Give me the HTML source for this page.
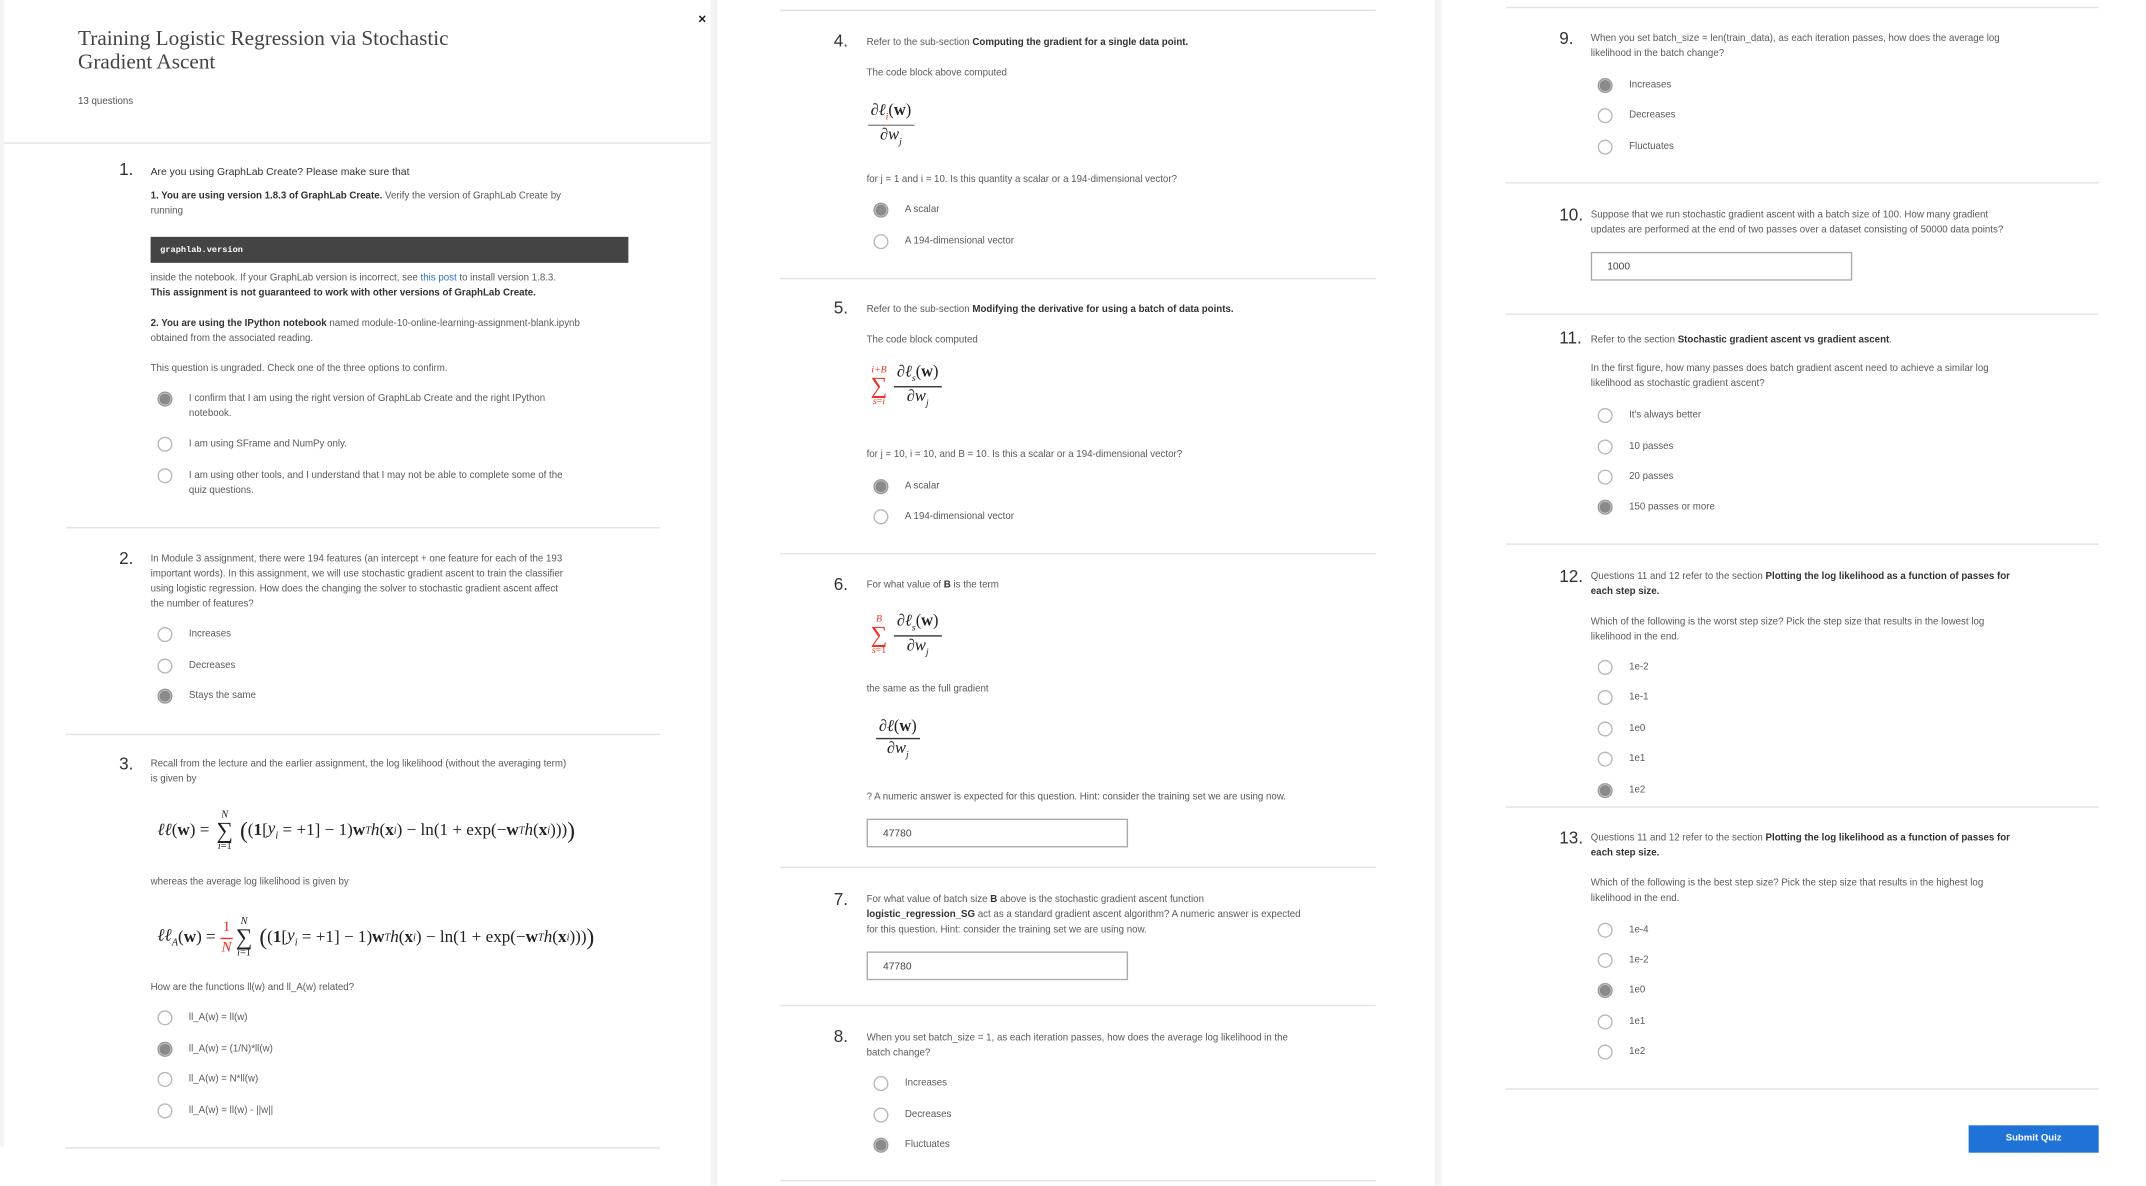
<!DOCTYPE html>
<html><head><meta charset="utf-8"><style>
*{margin:0;padding:0;box-sizing:border-box}
html,body{width:2146px;height:1185px;overflow:hidden;background:#fff}
#w{position:absolute;left:0;top:0;width:1568px;height:866px;transform:scale(1.369);transform-origin:0 0;font-family:"Liberation Sans",sans-serif;color:#555}
.bg{position:absolute;background:#f3f3f3}
.t{position:absolute;font-size:7.1px;line-height:11px;white-space:nowrap;color:#5a5a5a}
.t b{color:#333;font-weight:bold}
.h{font-size:7.6px;color:#333}
.n{position:absolute;font-size:12.5px;line-height:14px;color:#333;white-space:nowrap}
.hr{position:absolute;height:1px;background:#e2e2e2}
.r{position:absolute;width:11px;height:11px;border:1px solid #b8b8b8;border-radius:50%;background:#fff}
.r.c{border:1px solid #999;background:radial-gradient(circle,#8a8a8a 0 3.8px,#d0d0d0 4.2px 100%)}
.inp{position:absolute;border:1px solid #aaa;background:#fff;font-size:7.5px;line-height:19px;padding-left:11px;color:#444}
.m{position:absolute;font-family:"Liberation Serif",serif;color:#222;white-space:nowrap;display:flex;align-items:center;line-height:1.1}
.fr{display:inline-flex;flex-direction:column;align-items:center;line-height:1.15}
.fr .nu{border-bottom:0.8px solid #333;padding:0 2px 1px}
.i{font-style:italic}
.red{color:#e32}
.sm{font-size:0.6em}
.sum{display:inline-flex;flex-direction:column;align-items:center;line-height:0.9;margin:0 2px}
.sum .s{font-size:17px;line-height:0.95}
.big{font-size:17px}
</style></head><body><div id="w">
<div class="bg" style="left:0;top:0;width:3px;height:838px"></div>
<div class="bg" style="left:519px;top:0;width:5px;height:866px"></div>
<div class="bg" style="left:1048px;top:0;width:5px;height:866px"></div>

<div style="position:absolute;left:510px;top:9px;font-size:10px;font-weight:bold;color:#222">×</div>
<div style="position:absolute;left:57px;top:21px;font-family:'Liberation Serif',serif;font-size:15.5px;line-height:16.5px;color:#444">Training Logistic Regression via Stochastic<br>Gradient Ascent</div>
<div class="t" style="left:57px;top:69px;color:#555">13 questions</div>
<div class="hr" style="left:3px;top:104px;width:516px"></div>

<div class="n" style="left:87px;top:117px">1.</div>
<div class="t h" style="left:110px;top:120px">Are you using GraphLab Create? Please make sure that</div>
<div class="t" style="left:110px;top:138px"><b>1. You are using version 1.8.3 of GraphLab Create.</b> Verify the version of GraphLab Create by<br>running</div>
<div style="position:absolute;left:110px;top:173px;width:349px;height:19px;background:#444;color:#fff;font-family:'Liberation Mono',monospace;font-size:6.3px;font-weight:bold;line-height:19px;padding-left:7px">graphlab.version</div>
<div class="t" style="left:110px;top:198px">inside the notebook. If your GraphLab version is incorrect, see <span style="color:#2a73c9">this post</span> to install version 1.8.3.<br><b>This assignment is not guaranteed to work with other versions of GraphLab Create.</b></div>
<div class="t" style="left:110px;top:231px"><b>2. You are using the IPython notebook</b> named module-10-online-learning-assignment-blank.ipynb<br>obtained from the associated reading.</div>
<div class="t" style="left:110px;top:264px">This question is ungraded. Check one of the three options to confirm.</div>
<div class="r c" style="left:115px;top:286px"></div><div class="t" style="left:138px;top:286px">I confirm that I am using the right version of GraphLab Create and the right IPython<br>notebook.</div>
<div class="r" style="left:115px;top:319px"></div><div class="t" style="left:138px;top:319px">I am using SFrame and NumPy only.</div>
<div class="r" style="left:115px;top:342px"></div><div class="t" style="left:138px;top:342px">I am using other tools, and I understand that I may not be able to complete some of the<br>quiz questions.</div>
<div class="hr" style="left:48px;top:385px;width:434px"></div>

<div class="n" style="left:87px;top:401px">2.</div>
<div class="t" style="left:110px;top:403px">In Module 3 assignment, there were 194 features (an intercept + one feature for each of the 193<br>important words). In this assignment, we will use stochastic gradient ascent to train the classifier<br>using logistic regression. How does the changing the solver to stochastic gradient ascent affect<br>the number of features?</div>
<div class="r" style="left:115px;top:458px"></div><div class="t" style="left:138px;top:458px">Increases</div>
<div class="r" style="left:115px;top:481px"></div><div class="t" style="left:138px;top:481px">Decreases</div>
<div class="r c" style="left:115px;top:503px"></div><div class="t" style="left:138px;top:503px">Stays the same</div>
<div class="hr" style="left:48px;top:536px;width:434px"></div>

<div class="n" style="left:87px;top:551px">3.</div>
<div class="t" style="left:110px;top:553px">Recall from the lecture and the earlier assignment, the log likelihood (without the averaging term)<br>is given by</div>
<div class="m" style="left:115px;top:589px;height:36px;font-size:12.5px"><span class="i">ℓℓ</span>(<b>w</b>)&nbsp;=&nbsp;<span class="sum"><span class="sm i">N</span><span class="s">∑</span><span class="sm"><span class="i">i</span>=1</span></span>&nbsp;<span class="big">(</span>(<b>1</b>[<span class="i">y<sub class="sm">i</sub></span>&nbsp;=&nbsp;+1]&nbsp;−&nbsp;1)<b>w</b><sup class="sm i">T</sup><span class="i">h</span>(<b>x</b><sub class="sm i">i</sub>)&nbsp;−&nbsp;ln(1&nbsp;+&nbsp;exp(−<b>w</b><sup class="sm i">T</sup><span class="i">h</span>(<b>x</b><sub class="sm i">i</sub>)))<span class="big">)</span></div>
<div class="t" style="left:110px;top:639px">whereas the average log likelihood is given by</div>
<div class="m" style="left:115px;top:667px;height:36px;font-size:12.5px"><span class="i">ℓℓ<sub class="sm">A</sub></span>(<b>w</b>)&nbsp;=&nbsp;<span class="fr red" style="font-size:11px"><span class="nu" style="border-color:#e32">1</span><span class="i">N</span></span><span class="sum"><span class="sm i">N</span><span class="s">∑</span><span class="sm"><span class="i">i</span>=1</span></span>&nbsp;<span class="big">(</span>(<b>1</b>[<span class="i">y<sub class="sm">i</sub></span>&nbsp;=&nbsp;+1]&nbsp;−&nbsp;1)<b>w</b><sup class="sm i">T</sup><span class="i">h</span>(<b>x</b><sub class="sm i">i</sub>)&nbsp;−&nbsp;ln(1&nbsp;+&nbsp;exp(−<b>w</b><sup class="sm i">T</sup><span class="i">h</span>(<b>x</b><sub class="sm i">i</sub>)))<span class="big">)</span></div>
<div class="t" style="left:110px;top:716px">How are the functions ll(w) and ll_A(w) related?</div>
<div class="r" style="left:115px;top:738px"></div><div class="t" style="left:138px;top:738px">ll_A(w) = ll(w)</div>
<div class="r c" style="left:115px;top:761px"></div><div class="t" style="left:138px;top:761px">ll_A(w) = (1/N)*ll(w)</div>
<div class="r" style="left:115px;top:783px"></div><div class="t" style="left:138px;top:783px">ll_A(w) = N*ll(w)</div>
<div class="r" style="left:115px;top:806px"></div><div class="t" style="left:138px;top:806px">ll_A(w) = ll(w) - ||w||</div>
<div class="hr" style="left:48px;top:838px;width:434px"></div>

<div class="hr" style="left:570px;top:7px;width:435px"></div>
<div class="n" style="left:609px;top:23px">4.</div>
<div class="t" style="left:633px;top:26px">Refer to the sub-section <b>Computing the gradient for a single data point.</b></div>
<div class="t" style="left:633px;top:48px">The code block above computed</div>
<div class="m" style="left:634px;top:74px;font-size:12px"><span class="fr"><span class="nu" style="border-bottom-color:#888">∂<span class="i">ℓ<sub class="sm red">i</sub></span>(<b>w</b>)</span><span>∂<span class="i">w<sub class="sm">j</sub></span></span></span></div>
<div class="t" style="left:633px;top:126px">for j = 1 and i = 10. Is this quantity a scalar or a 194-dimensional vector?</div>
<div class="r c" style="left:638px;top:148px"></div><div class="t" style="left:661px;top:148px">A scalar</div>
<div class="r" style="left:638px;top:171px"></div><div class="t" style="left:661px;top:171px">A 194-dimensional vector</div>
<div class="hr" style="left:570px;top:203px;width:435px"></div>

<div class="n" style="left:609px;top:218px">5.</div>
<div class="t" style="left:633px;top:221px">Refer to the sub-section <b>Modifying the derivative for using a batch of data points.</b></div>
<div class="t" style="left:633px;top:243px">The code block computed</div>
<div class="m" style="left:634px;top:265px;font-size:12px"><span class="sum red"><span class="sm i">i+B</span><span class="s">∑</span><span class="sm"><span class="i">s</span>=<span class="i">i</span></span></span>&nbsp;<span class="fr"><span class="nu">∂<span class="i">ℓ<sub class="sm">s</sub></span>(<b>w</b>)</span><span>∂<span class="i">w<sub class="sm">j</sub></span></span></span></div>
<div class="t" style="left:633px;top:327px">for j = 10, i = 10, and B = 10. Is this a scalar or a 194-dimensional vector?</div>
<div class="r c" style="left:638px;top:350px"></div><div class="t" style="left:661px;top:350px">A scalar</div>
<div class="r" style="left:638px;top:372px"></div><div class="t" style="left:661px;top:372px">A 194-dimensional vector</div>
<div class="hr" style="left:570px;top:404px;width:435px"></div>

<div class="n" style="left:609px;top:420px">6.</div>
<div class="t" style="left:633px;top:422px">For what value of <b>B</b> is the term</div>
<div class="m" style="left:634px;top:447px;font-size:12px"><span class="sum red"><span class="sm i">B</span><span class="s">∑</span><span class="sm"><span class="i">s</span>=1</span></span>&nbsp;<span class="fr"><span class="nu">∂<span class="i">ℓ<sub class="sm">s</sub></span>(<b>w</b>)</span><span>∂<span class="i">w<sub class="sm">j</sub></span></span></span></div>
<div class="t" style="left:633px;top:498px">the same as the full gradient</div>
<div class="m" style="left:640px;top:524px;font-size:12px"><span class="fr"><span class="nu">∂<span class="i">ℓ</span>(<b>w</b>)</span><span>∂<span class="i">w<sub class="sm">j</sub></span></span></span></div>
<div class="t" style="left:633px;top:577px">? A numeric answer is expected for this question. Hint: consider the training set we are using now.</div>
<div class="inp" style="left:633px;top:598px;width:191px;height:21px">47780</div>
<div class="hr" style="left:570px;top:633px;width:435px"></div>

<div class="n" style="left:609px;top:650px">7.</div>
<div class="t" style="left:633px;top:652px">For what value of batch size <b>B</b> above is the stochastic gradient ascent function<br><b>logistic_regression_SG</b> act as a standard gradient ascent algorithm? A numeric answer is expected<br>for this question. Hint: consider the training set we are using now.</div>
<div class="inp" style="left:633px;top:695px;width:191px;height:21px">47780</div>
<div class="hr" style="left:570px;top:734px;width:435px"></div>

<div class="n" style="left:609px;top:750px">8.</div>
<div class="t" style="left:633px;top:753px">When you set batch_size = 1, as each iteration passes, how does the average log likelihood in the<br>batch change?</div>
<div class="r" style="left:638px;top:786px"></div><div class="t" style="left:661px;top:786px">Increases</div>
<div class="r" style="left:638px;top:809px"></div><div class="t" style="left:661px;top:809px">Decreases</div>
<div class="r c" style="left:638px;top:831px"></div><div class="t" style="left:661px;top:831px">Fluctuates</div>
<div class="hr" style="left:570px;top:862px;width:435px"></div>

<div class="hr" style="left:1100px;top:5px;width:433px"></div>
<div class="n" style="left:1139px;top:21px">9.</div>
<div class="t" style="left:1162px;top:23px">When you set batch_size = len(train_data), as each iteration passes, how does the average log<br>likelihood in the batch change?</div>
<div class="r c" style="left:1167px;top:57px"></div><div class="t" style="left:1190px;top:57px">Increases</div>
<div class="r" style="left:1167px;top:79px"></div><div class="t" style="left:1190px;top:79px">Decreases</div>
<div class="r" style="left:1167px;top:102px"></div><div class="t" style="left:1190px;top:102px">Fluctuates</div>
<div class="hr" style="left:1100px;top:133px;width:433px"></div>

<div class="n" style="left:1139px;top:150px">10.</div>
<div class="t" style="left:1162px;top:152px">Suppose that we run stochastic gradient ascent with a batch size of 100. How many gradient<br>updates are performed at the end of two passes over a dataset consisting of 50000 data points?</div>
<div class="inp" style="left:1162px;top:184px;width:191px;height:21px">1000</div>
<div class="hr" style="left:1100px;top:229px;width:433px"></div>

<div class="n" style="left:1139px;top:240px">11.</div>
<div class="t" style="left:1162px;top:243px">Refer to the section <b>Stochastic gradient ascent vs gradient ascent</b>.</div>
<div class="t" style="left:1162px;top:264px">In the first figure, how many passes does batch gradient ascent need to achieve a similar log<br>likelihood as stochastic gradient ascent?</div>
<div class="r" style="left:1167px;top:298px"></div><div class="t" style="left:1190px;top:298px">It's always better</div>
<div class="r" style="left:1167px;top:321px"></div><div class="t" style="left:1190px;top:321px">10 passes</div>
<div class="r" style="left:1167px;top:343px"></div><div class="t" style="left:1190px;top:343px">20 passes</div>
<div class="r c" style="left:1167px;top:365px"></div><div class="t" style="left:1190px;top:365px">150 passes or more</div>
<div class="hr" style="left:1100px;top:397px;width:433px"></div>

<div class="n" style="left:1139px;top:414px">12.</div>
<div class="t" style="left:1162px;top:416px">Questions 11 and 12 refer to the section <b>Plotting the log likelihood as a function of passes for<br>each step size.</b></div>
<div class="t" style="left:1162px;top:449px">Which of the following is the worst step size? Pick the step size that results in the lowest log<br>likelihood in the end.</div>
<div class="r" style="left:1167px;top:482px"></div><div class="t" style="left:1190px;top:482px">1e-2</div>
<div class="r" style="left:1167px;top:504px"></div><div class="t" style="left:1190px;top:504px">1e-1</div>
<div class="r" style="left:1167px;top:527px"></div><div class="t" style="left:1190px;top:527px">1e0</div>
<div class="r" style="left:1167px;top:549px"></div><div class="t" style="left:1190px;top:549px">1e1</div>
<div class="r c" style="left:1167px;top:572px"></div><div class="t" style="left:1190px;top:572px">1e2</div>
<div class="hr" style="left:1100px;top:589px;width:433px"></div>

<div class="n" style="left:1139px;top:605px">13.</div>
<div class="t" style="left:1162px;top:607px">Questions 11 and 12 refer to the section <b>Plotting the log likelihood as a function of passes for<br>each step size.</b></div>
<div class="t" style="left:1162px;top:640px">Which of the following is the best step size? Pick the step size that results in the highest log<br>likelihood in the end.</div>
<div class="r" style="left:1167px;top:674px"></div><div class="t" style="left:1190px;top:674px">1e-4</div>
<div class="r" style="left:1167px;top:696px"></div><div class="t" style="left:1190px;top:696px">1e-2</div>
<div class="r c" style="left:1167px;top:718px"></div><div class="t" style="left:1190px;top:718px">1e0</div>
<div class="r" style="left:1167px;top:741px"></div><div class="t" style="left:1190px;top:741px">1e1</div>
<div class="r" style="left:1167px;top:763px"></div><div class="t" style="left:1190px;top:763px">1e2</div>
<div class="hr" style="left:1100px;top:795px;width:433px"></div>

<div style="position:absolute;left:1438px;top:822px;width:95px;height:20px;background:#1f72d6;color:#fff;font-size:7px;font-weight:bold;line-height:20px;text-align:center">Submit Quiz</div>
</div></body></html>
